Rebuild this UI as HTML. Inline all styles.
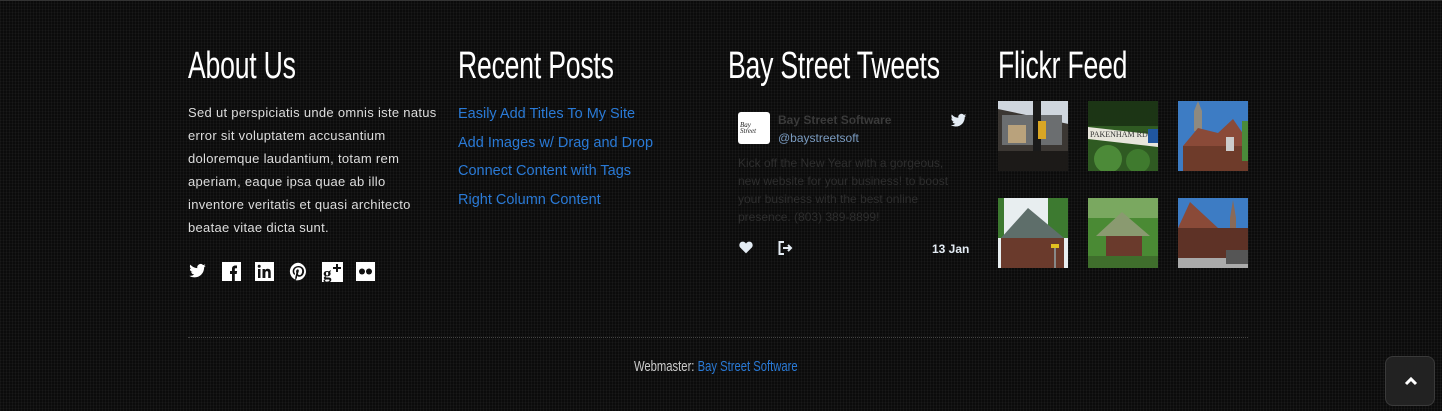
<!DOCTYPE html>
<html><head><meta charset="utf-8"><style>
*{margin:0;padding:0;box-sizing:border-box}
body{width:1442px;height:411px;overflow:hidden;background-color:#0b0b0b;
background-image:linear-gradient(rgba(255,255,255,0.025) 1px,transparent 1px),linear-gradient(90deg,rgba(255,255,255,0.03) 1px,transparent 1px);
background-size:3px 3px;font-family:"Liberation Sans",sans-serif;position:relative;border-top:1px solid #333}
.h{position:absolute;top:44px;color:#fff;font-size:38px;font-weight:normal;transform:scaleX(0.70);transform-origin:left top;white-space:nowrap;letter-spacing:-0.3px}
.about{position:absolute;left:188px;top:100px;width:252px;color:#ddd;font-size:13px;line-height:23px;letter-spacing:0.3px}
.posts{position:absolute;left:458px;top:99px;font-size:14.5px;line-height:28.5px}
.posts a{display:block;color:#2a7ad6;text-decoration:none}
.soc{position:absolute;top:261px;left:188px}
.soc svg{position:absolute;top:0}
.img{position:absolute;width:70px;height:70px}
.tw{position:absolute;left:738px;top:111px}
.line{position:absolute;left:188px;top:336px;width:1060px;border-top:1px dotted #444}
.foot{position:absolute;left:634px;top:357px;font-size:15px;color:#ccc;transform:scaleX(0.75);transform-origin:left top;white-space:nowrap}
.foot a{color:#2a7ad6;text-decoration:none}
.top{position:absolute;left:1385px;top:355px;width:50px;height:50px;border-radius:8px;background:#222;border:1px solid #3a3a3a}
</style></head><body>
<div class="h" style="left:188px">About Us</div>
<div class="h" style="left:458px">Recent Posts</div>
<div class="h" style="left:728px">Bay Street Tweets</div>
<div class="h" style="left:998px">Flickr Feed</div>

<div class="about">Sed ut perspiciatis unde omnis iste natus error sit voluptatem accusantium doloremque laudantium, totam rem aperiam, eaque ipsa quae ab illo inventore veritatis et quasi architecto beatae vitae dicta sunt.</div>

<div class="posts">
<a>Easily Add Titles To My Site</a>
<a>Add Images w/ Drag and Drop</a>
<a>Connect Content with Tags</a>
<a>Right Column Content</a>
</div>

<div class="soc">
<svg style="left:0" width="19" height="18" viewBox="0 0 24 24"><path fill="#fff" d="M23 5a9 9 0 0 1-2.6.7A4.5 4.5 0 0 0 22.4 3a9 9 0 0 1-2.9 1.1A4.5 4.5 0 0 0 11.8 8.2 12.8 12.8 0 0 1 2.5 3.5a4.5 4.5 0 0 0 1.4 6 4.5 4.5 0 0 1-2-.6 4.5 4.5 0 0 0 3.6 4.5 4.5 4.5 0 0 1-2 .1 4.5 4.5 0 0 0 4.2 3.1A9 9 0 0 1 1 18.5 12.8 12.8 0 0 0 8 20.5c8.3 0 12.8-6.9 12.8-12.8v-.6A9 9 0 0 0 23 5z"/></svg>
<svg style="left:34px" width="19" height="19" viewBox="0 0 19 19"><rect width="19" height="19" fill="#fff"/><path fill="#111" d="M10 19v-7H8v-3h2V7c0-2.5 1.4-3.5 3.5-3.5H15v2.8h-1.2c-.8 0-1 .4-1 1V9h2.3l-.4 3h-1.9v7z"/></svg>
<svg style="left:67px" width="19" height="19" viewBox="0 0 19 19"><rect width="19" height="19" fill="#fff"/><rect x="3" y="7" width="2.5" height="9" fill="#111"/><circle cx="4.2" cy="4.3" r="1.5" fill="#111"/><path fill="#111" d="M7.5 7h2.4v1.3c.5-.9 1.5-1.5 2.8-1.5 2.2 0 3 1.4 3 3.6V16h-2.5v-5c0-1.1-.3-1.9-1.3-1.9s-1.5.8-1.5 1.9v5H7.5z"/></svg>
<svg style="left:101px" width="19" height="19" viewBox="0 0 24 24"><path fill="#fff" d="M12 1a11 11 0 0 0-4 21.2c-.1-.9-.2-2.2 0-3.1l1.3-5.5s-.3-.7-.3-1.6c0-1.5.9-2.7 2-2.7.9 0 1.4.7 1.4 1.6 0 1-.6 2.4-1 3.7-.3 1.1.6 2 1.700 2 2 0 3.5-2.1 3.5-5.2 0-2.7-2-4.6-4.8-4.6-3.3 0-5.2 2.5-5.2 5 0 1 .4 2 .9 2.6l.1.4-.3 1.3c0 .2-.2.3-.4.2-1.4-.7-2.300-2.7-2.300-4.4 0-3.6 2.6-6.9 7.5-6.9 3.9 0 7 2.8 7 6.6 0 3.9-2.5 7.1-5.9 7.1-1.2 0-2.3-.6-2.6-1.3l-.7 2.7c-.3 1-1 2.2-1.4 3A11 11 0 1 0 12 1z"/></svg>
<svg style="left:134px" width="21" height="20" viewBox="0 0 21 20"><rect width="21" height="20" fill="#fff"/><text x="1" y="17" font-family="Liberation Serif" font-weight="bold" font-size="17" fill="#111">g</text><path d="M15 2v8M11 6h8" stroke="#111" stroke-width="2"/></svg>
<svg style="left:168px" width="19" height="19" viewBox="0 0 19 19"><rect width="19" height="19" fill="#fff"/><circle cx="6" cy="9.5" r="3" fill="#111"/><circle cx="13" cy="9.5" r="3" fill="#111"/></svg>
</div>

<div class="tw">
<div style="position:absolute;left:0;top:0;width:32px;height:32px;background:#fff;border-radius:3px;font:italic 7px 'Liberation Serif';color:#222;padding:10px 2px;line-height:6px">Bay Street</div>
<div style="position:absolute;left:40px;top:1px;font-size:12px;font-weight:bold;color:#3a3a3a;white-space:nowrap">Bay Street Software</div>
<div style="position:absolute;left:40px;top:19px;font-size:12px;color:#7a9bc0;white-space:nowrap">@baystreetsoft</div>
<svg style="position:absolute;left:212px;top:1px" width="17" height="15" viewBox="0 0 24 20"><path fill="#e4ecf4" d="M23 3a9 9 0 0 1-2.6.7A4.5 4.5 0 0 0 22.4 1a9 9 0 0 1-2.9 1.1A4.5 4.5 0 0 0 11.8 6.2 12.8 12.8 0 0 1 2.5 1.5a4.5 4.5 0 0 0 1.4 6 4.5 4.5 0 0 1-2-.6 4.5 4.5 0 0 0 3.6 4.5 4.5 4.5 0 0 1-2 .1 4.5 4.5 0 0 0 4.2 3.1A9 9 0 0 1 1 16.5 12.8 12.8 0 0 0 8 18.5c8.3 0 12.8-6.9 12.8-12.8v-.6A9 9 0 0 0 23 3z"/></svg>
<div style="position:absolute;left:0;top:42px;width:220px;font-size:12px;line-height:18px;color:#2e2e2e">Kick off the New Year with a gorgeous, new website for your business! to boost your business with the best online presence. (803) 389-8899!</div>
<svg style="position:absolute;left:1px;top:129px" width="14" height="13" viewBox="0 0 24 22"><path fill="#e4ecf4" d="M12 21 2 11C-1 7.5 1 1 6.5 1c2.5 0 4.3 1.5 5.5 3.3C13.2 2.5 15 1 17.5 1 23 1 25 7.5 22 11z"/></svg>
<svg style="position:absolute;left:40px;top:129px" width="15" height="14" viewBox="0 0 15 14"><path d="M6 1H1.5v12H6M5 7h8M10 4l3 3-3 3" stroke="#e4ecf4" stroke-width="2" fill="none"/></svg>
<div style="position:absolute;left:194px;top:130px;font-size:12px;font-weight:bold;color:#e4ecf4;white-space:nowrap">13 Jan</div>
</div>

<svg class="img" style="left:998px;top:100px" viewBox="0 0 70 70"><rect width="70" height="70" fill="#cfd6de"/><rect y="0" width="70" height="70" fill="#2a2620" opacity=".9" transform="skewY(12) translate(0,8)"/><rect x="4" y="14" width="60" height="30" fill="#6b6e70"/><rect x="10" y="24" width="18" height="18" fill="#b9a27c"/><rect x="35" y="0" width="8" height="70" fill="#1a1a1a"/><rect x="40" y="20" width="8" height="18" fill="#d9a624"/><rect x="0" y="50" width="70" height="20" fill="#1c1a18"/></svg>
<svg class="img" style="left:1088px;top:100px" viewBox="0 0 70 70"><rect width="70" height="70" fill="#2f5a22"/><rect width="70" height="25" fill="#1c3515"/><path d="M0 38l70 8V34L0 26z" fill="#e8e6dc"/><rect x="60" y="28" width="10" height="14" fill="#2056a0"/><circle cx="20" cy="58" r="14" fill="#4c8a38"/><circle cx="50" cy="60" r="12" fill="#3f7a2e"/><text x="2" y="36" font-size="8" fill="#333" font-family="Liberation Serif">PAKENHAM RD</text></svg>
<svg class="img" style="left:1178px;top:100px" viewBox="0 0 70 70"><rect width="70" height="70" fill="#3d7cc4"/><path d="M16 10l4-10 4 10v20h-8z" fill="#8e8a80"/><path d="M5 45l15-18 20 5 15-14 15 22v30H5z" fill="#8a4a38"/><rect x="5" y="45" width="65" height="25" fill="#6e3b2a"/><rect x="48" y="36" width="8" height="14" fill="#ccc"/><rect x="64" y="20" width="6" height="40" fill="#4a8a3a"/></svg>
<svg class="img" style="left:998px;top:197px" viewBox="0 0 70 70"><rect width="70" height="70" fill="#e8eef0"/><rect x="50" y="0" width="20" height="40" fill="#3d7a30"/><rect x="0" y="0" width="6" height="40" fill="#3d7a30"/><path d="M3 40L30 10 66 40z" fill="#5e6e6a"/><rect x="3" y="40" width="63" height="30" fill="#6a3a2c"/><rect x="56" y="48" width="2" height="22" fill="#888"/><rect x="53" y="46" width="8" height="4" fill="#e3c020"/></svg>
<svg class="img" style="left:1088px;top:197px" viewBox="0 0 70 70"><rect width="70" height="70" fill="#4a8a34"/><rect width="70" height="20" fill="#7aa860"/><path d="M8 38L34 14 62 38z" fill="#8a9a70"/><rect x="18" y="38" width="36" height="22" fill="#6a3a2c"/><rect x="0" y="58" width="70" height="12" fill="#3f6e2c"/></svg>
<svg class="img" style="left:1178px;top:197px" viewBox="0 0 70 70"><rect width="70" height="70" fill="#3d7cc4"/><path d="M52 20l3-18 3 18v20h-6z" fill="#8a6a58"/><path d="M0 30L12 4 40 30 70 30v30H0z" fill="#8a4a38"/><rect x="0" y="30" width="70" height="30" fill="#5e3226"/><rect x="0" y="60" width="70" height="10" fill="#aaa"/><rect x="48" y="52" width="22" height="14" fill="#555"/></svg>

<div class="line"></div>
<div class="foot">Webmaster: <a>Bay Street Software</a></div>
<div class="top"><svg style="position:absolute;left:18px;top:19px" width="14" height="10" viewBox="0 0 14 10"><path d="M2 8l5-5 5 5" stroke="#fff" stroke-width="3" fill="none"/></svg></div>
</body></html>
